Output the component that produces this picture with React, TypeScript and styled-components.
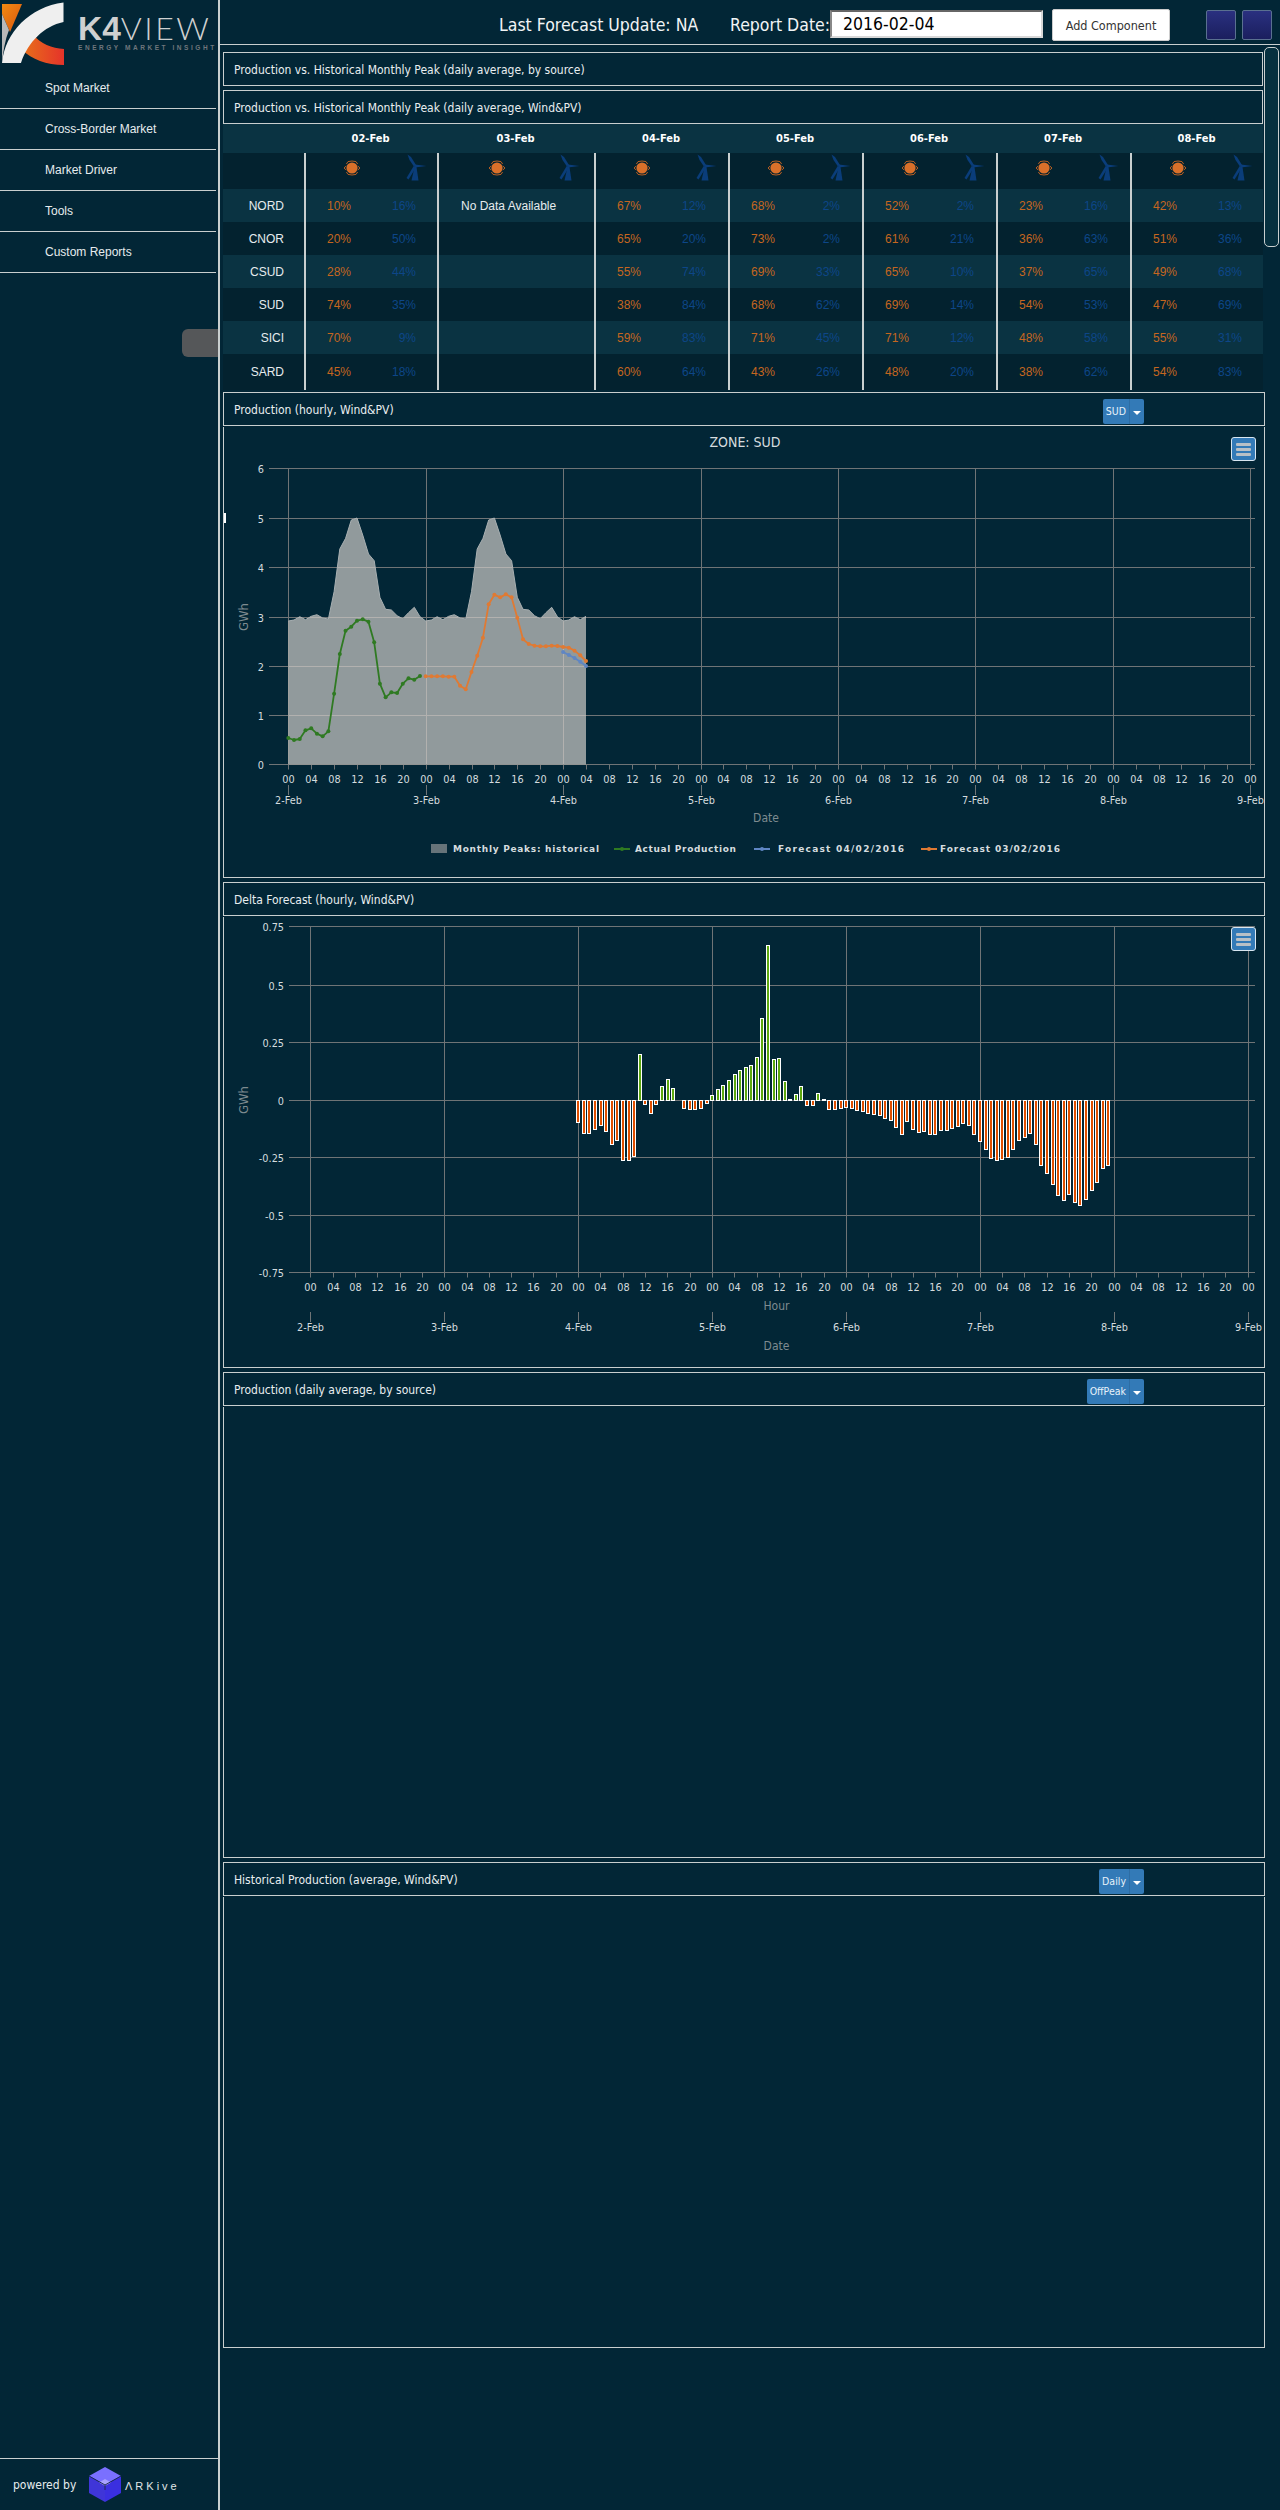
import React from 'react';
import styled, { createGlobalStyle } from 'styled-components';

const BG = '#022636';
const LINE = '#c9cfcf';
const TAHOMA = `"DejaVu Sans", sans-serif`;
const ARIAL = `"Liberation Sans", Arial, sans-serif`;

const Global = createGlobalStyle`
  html, body { margin: 0; padding: 0; background: ${BG}; }
  body { font-family: ${ARIAL}; width: 1280px; height: 2510px; overflow: hidden; }
  * { box-sizing: border-box; }
`;

const Page = styled.div`
  position: relative;
  display: flex;
  width: 1280px;
  height: 2510px;
  background: ${BG};
`;

const Sidebar = styled.aside`
  width: 220px;
  height: 2510px;
  flex: none;
  display: flex;
  flex-direction: column;
  border-right: 2px solid ${LINE};
  position: relative;
`;

const LogoRow = styled.div`
  height: 68px;
  flex: none;
  display: flex;
  padding: 2px 0 0 2px;
`;

const LogoWords = styled.div`
  margin: 10px 0 0 12px;
  color: #cfd0d0;
  display: flex;
  flex-direction: column;
`;

const LogoTitle = styled.div`
  font-family: ${ARIAL};
  font-size: 33.5px;
  line-height: 32px;
  white-space: nowrap;
  b { font-weight: 700; }
  span { font-family: Lato, sans-serif; font-weight: 300; letter-spacing: 2.5px; font-size: 32px; }
`;

const LogoTag = styled.div`
  margin-top: -2px;
  font-size: 6.5px;
  line-height: 9px;
  letter-spacing: 2.55px;
  color: #6f767c;
  white-space: nowrap;
  font-weight: 700;
`;

const Nav = styled.nav`
  display: flex;
  flex-direction: column;
  width: 216px;
`;

const NavItem = styled.div`
  height: 41px;
  padding: 0 0 0 45px;
  display: flex;
  align-items: center;
  font-size: 12px;
  color: #e6ecee;
  border-bottom: 1px solid ${LINE};
`;

const Handle = styled.div`
  position: absolute;
  left: 182px;
  top: 329px;
  width: 36px;
  height: 28px;
  background: #555759;
  border-radius: 6px 0 0 6px;
`;

const Footer = styled.div`
  margin-top: auto;
  height: 52px;
  border-top: 1px solid ${LINE};
  display: flex;
  align-items: center;
  padding: 0 0 0 13px;
  color: #e6ecee;
  font-family: ${TAHOMA};
  font-stretch: condensed;
  font-size: 12px;
`;

const Powered = styled.span`
  width: 75px;
  white-space: nowrap;
`;

const ArkText = styled.span`
  margin: 3px 0 0 3px;
  font-family: ${ARIAL};
  font-size: 11px;
  letter-spacing: 3px;
  color: #e0e6e8;
`;

const Main = styled.main`
  flex: 1;
  display: flex;
  flex-direction: column;
  min-width: 0;
`;

const TopBar = styled.header`
  height: 45px;
  flex: none;
  display: flex;
  align-items: flex-start;
  border-bottom: 1px solid ${LINE};
  color: #f1f4f5;
  font-family: ${TAHOMA};
  font-stretch: condensed;
  font-size: 17.5px;
`;

const TopLabel = styled.span<{ $ml: number; $w: number }>`
  width: ${p => p.$w}px;
  margin: 15px 0 0 ${p => p.$ml}px;
  line-height: 20px;
  white-space: nowrap;
`;

const DateInput = styled.div`
  width: 213px;
  height: 28px;
  margin: 10px 0 0 0;
  background: #fff;
  border: 2px solid #d8d8d8;
  border-top-color: #666;
  border-left-color: #888;
  color: #000;
  padding: 1px 0 0 11px;
  line-height: 22px;
`;

const AddButton = styled.div`
  width: 118px;
  height: 32px;
  margin: 9px 0 0 9px;
  background: #fff;
  border: 1px solid #ccc;
  border-radius: 2px;
  color: #333;
  font-size: 12.5px;
  line-height: 31px;
  text-align: center;
`;

const SquareButton = styled.div<{ $ml: number }>`
  width: 30px;
  height: 30px;
  margin: 10px 0 0 ${p => p.$ml}px;
  background: linear-gradient(#2a3080, #1b1f5e);
  border: 1px solid #5a7090;
  border-radius: 2px;
`;

const Stack = styled.div`
  display: flex;
  flex-direction: column;
  padding: 7px 0 0 3px;
`;

const Panel = styled.section<{ $w?: number; $mb?: number }>`
  width: ${p => p.$w ?? 1042}px;
  margin-bottom: ${p => p.$mb ?? 0}px;
`;

const PanelHeader = styled.div`
  height: 34px;
  border: 1px solid ${LINE};
  padding: 1px 0 0 10px;
  position: relative;
  display: flex;
  align-items: center;
  color: #e9eef0;
  font-family: ${TAHOMA};
  font-stretch: condensed;
  font-size: 12px;
`;

const PanelBody = styled.div<{ $h: number }>`
  position: relative;
  height: ${p => p.$h}px;
  margin-top: 1px;
  border: 1px solid ${LINE};
  border-top: none;
  svg { display: block; }
`;

const Dropdown = styled.div<{ $right: number }>`
  position: absolute;
  right: ${p => p.$right}px;
  top: 6px;
  height: 25px;
  display: flex;
  background: #337ab7;
  border-radius: 2px;
  color: #e8f2fa;
  font-size: 10.5px;
  line-height: 25px;
`;

const DropLabel = styled.span`
  padding: 0 3px;
  border-right: 1px solid #2e6da4;
`;

const Caret = styled.span`
  width: 14px;
  position: relative;
  &::after {
    content: '';
    position: absolute;
    left: 3px;
    top: 12px;
    border-left: 4px solid transparent;
    border-right: 4px solid transparent;
    border-top: 4px solid #fff;
  }
`;

const MenuButton = styled.div`
  position: absolute;
  top: 10px;
  right: 8px;
  width: 25px;
  height: 24px;
  display: flex;
  flex-direction: column;
  justify-content: center;
  gap: 2px;
  padding: 0 4px;
  background: #337ab7;
  border: 1px solid #d8e6f0;
  border-radius: 3px;
  i { display: block; height: 3px; background: #b9c0c6; border-radius: 1px; }
`;

const Table = styled.div`
  width: 1040px;
  height: 266px;
  margin-bottom: 2px;
  color: #e6ecee;
  font-size: 12px;
`;

const Row = styled.div<{ $bg: string; $h: number }>`
  display: grid;
  grid-template-columns: 81px 133px 157px 134px 134px 134px 134px 133px;
  height: ${p => p.$h}px;
  background: ${p => p.$bg};
`;

const HeadCell = styled.div`
  display: flex;
  align-items: center;
  justify-content: center;
  font-family: ${TAHOMA};
  font-stretch: condensed;
  font-weight: 700;
  font-size: 11px;
  color: #fff;
`;

const Zone = styled.div`
  display: flex;
  align-items: center;
  justify-content: flex-end;
  padding-right: 20px;
`;

const DayCell = styled.div`
  border-left: 2px solid ${LINE};
  display: flex;
  align-items: center;
`;

const Pct = styled.span<{ $c: string; $w: number }>`
  width: ${p => p.$w}px;
  text-align: right;
  color: ${p => p.$c};
`;

const NoData = styled.span`
  padding-left: 22px;
  color: #e6ecee;
`;

const IconSlot = styled.div<{ $sun: number; $gap: number }>`
  padding: 0 0 7px ${p => p.$sun}px;
  display: flex;
  align-items: center;
  gap: ${p => p.$gap}px;
`;

const Tick = styled.div`
  position: absolute;
  left: 224px;
  top: 513px;
  width: 2px;
  height: 10px;
  background: #fff;
`;

const Scrollbar = styled.div`
  position: absolute;
  left: 1264px;
  top: 47px;
  width: 15px;
  height: 200px;
  border: 1px solid ${LINE};
  border-radius: 5px;
  background: #06303f;
`;

const Sun = () => (
  <svg width="18" height="18" viewBox="0 0 18 18">
    <circle cx="9" cy="9" r="5.6" fill="#d9702a" />
    <path d="M1 9 L3.2 7 M1 9 L3.2 11 M17 9 L14.8 7 M17 9 L14.8 11 M5 2.6 Q9 1.4 13 2.6 M5 15.4 Q9 16.6 13 15.4 M5 2.6 L3.4 5 M13 2.6 L14.6 5 M5 15.4 L3.4 13 M13 15.4 L14.6 13" stroke="#b85f22" strokeWidth="1" fill="none" />
  </svg>
);

const Turbine = () => (
  <svg width="22" height="28" viewBox="0 0 22 28">
    <path d="M2.5 0.500 L6 3 L11 11 L9 12.500 L4.500 6 Z" fill="#0a3d7a" />
    <path d="M10 10.500 L21.500 12 L10 13.500 Z" fill="#0a3d7a" />
    <path d="M9 11.500 L11 13.500 L3.500 25.500 L1.500 24 Z" fill="#0a3d7a" />
    <path d="M9.500 13 L11.500 13 L13.500 26.500 L6.500 26.500 Z" fill="#0a3d7a" />
  </svg>
);

const Logo = () => (
  <svg width="64" height="64" viewBox="0 0 64 64">
    <defs>
      <linearGradient id="lo1" x1="0" y1="0" x2="1" y2="1">
        <stop offset="0" stopColor="#f08a12" />
        <stop offset="1" stopColor="#d9560f" />
      </linearGradient>
      <linearGradient id="lo2" x1="0" y1="0" x2="1" y2="0">
        <stop offset="0" stopColor="#e8701a" />
        <stop offset="1" stopColor="#e5332a" />
      </linearGradient>
    </defs>
    <path d="M0 2 L20 2 L8 30 L0 12 Z" fill="url(#lo1)" />
    <path d="M32 33 C38 42 50 46 62 47 L62 63 C44 63 30 57 20 48 Z" fill="url(#lo2)" />
    <path d="M61.500 0.500 L61.500 20 C42 24 26 40 19 61 L0 61 C3 30 28 5 61.500 0.500 Z" fill="#efefef" />
    <path d="M0 12 L7 28 C3 38 1 50 0 61 Z" fill="#b9b9b9" />
  </svg>
);

const Cube = () => (
  <svg width="34" height="37" viewBox="0 0 34 37">
    <path d="M17 1 L33 10 L17 19 L1 10 Z" fill="#7a70ff" />
    <path d="M1 10 L17 19 L17 36 L1 27 Z" fill="#3f35d8" />
    <path d="M33 10 L17 19 L17 36 L33 27 Z" fill="#3a2fe0" />
    <path d="M17 13 L23 16.500 L17 20 L11 16.500 Z" fill="#a9a2ff" />
    <path d="M1 10 L17 19 L33 10 M17 19 L17 24" stroke="#1d2a55" strokeWidth="1" fill="none" />
  </svg>
);

const DAYS = ['02-Feb', '03-Feb', '04-Feb', '05-Feb', '06-Feb', '07-Feb', '08-Feb'];
const ZONES = ['NORD', 'CNOR', 'CSUD', 'SUD', 'SICI', 'SARD'];
const SOLAR_C = '#c5661f';
const WIND_C = '#0d4688';
const VALUES: [string, string][][] = [
  [['10', '16'], ['67', '12'], ['68', '2'], ['52', '2'], ['23', '16'], ['42', '13']],
  [['20', '50'], ['65', '20'], ['73', '2'], ['61', '21'], ['36', '63'], ['51', '36']],
  [['28', '44'], ['55', '74'], ['69', '33'], ['65', '10'], ['37', '65'], ['49', '68']],
  [['74', '35'], ['38', '84'], ['68', '62'], ['69', '14'], ['54', '53'], ['47', '69']],
  [['70', '9'], ['59', '83'], ['71', '45'], ['71', '12'], ['48', '58'], ['55', '31']],
  [['45', '18'], ['60', '64'], ['43', '26'], ['48', '20'], ['38', '62'], ['54', '83']],
];
const STRIPE = '#0a3342';
const DARK = '#03222f';

const DataTable = () => (
  <Table>
    <Row $bg={STRIPE} $h={29}>
      <div />
      {DAYS.map(d => <HeadCell key={d}>{d}</HeadCell>)}
    </Row>
    <Row $bg={DARK} $h={36}>
      <div />
      {DAYS.map((d, i) => (
        <DayCell key={d}>
          <IconSlot $sun={i === 1 ? 49 : 37} $gap={i === 1 ? 52 : 44}>
            <Sun />
            <Turbine />
          </IconSlot>
        </DayCell>
      ))}
    </Row>
    {ZONES.map((z, r) => (
      <Row key={z} $bg={r % 2 === 0 ? STRIPE : DARK} $h={r === 5 ? 36 : 33}>
        <Zone>{z}</Zone>
        {VALUES[r].map((v, i) => (
          <React.Fragment key={i}>
            <DayCell>
              <Pct $c={SOLAR_C} $w={45}>{v[0]}%</Pct>
              <Pct $c={WIND_C} $w={65}>{v[1]}%</Pct>
            </DayCell>
            {i === 0 && <DayCell>{r === 0 && <NoData>No Data Available</NoData>}</DayCell>}
          </React.Fragment>
        ))}
      </Row>
    ))}
  </Table>
);

const GRID = '#6f7476';
const LABEL = '#d5dcdf';
const TITLE = '#7e8b90';
const HOURS = ['00', '04', '08', '12', '16', '20'];

const ChartText = styled.text`
  font-family: ${TAHOMA};
  font-stretch: condensed;
  font-size: 10.8px;
  fill: ${LABEL};
`;

const ChartTitle = styled(ChartText)`
  font-size: 14px;
`;

const AxisTitle = styled(ChartText)`
  font-size: 12px;
  fill: ${TITLE};
`;

const YTitle = styled(AxisTitle)`
  font-size: 13px;
`;

const LegendText = styled.text`
  font-family: ${TAHOMA};
  font-size: 9px;
  font-weight: 700;
  fill: #d5dcdf;
`;

interface AxisProps {
  x0: number; dx: number; left: number; right: number;
  yTop: number; yBot: number; ys: number[]; yLabels: string[]; labelX: number;
  hourY: number; dayY: number; dayTick0: number; dayTick1: number;
  dayLabels: string[];
}

const Axes = ({ x0, dx, left, right, yTop, yBot, ys, yLabels, labelX, hourY, dayY, dayTick0, dayTick1, dayLabels }: AxisProps) => {
  const hourTicks: React.ReactNode[] = [];
  for (let d = 0; d <= 7; d++) {
    for (let k = 0; k < (d === 7 ? 1 : 6); k++) {
      const x = Math.round(x0 + d * dx + (k * dx) / 6) + 0.5;
      hourTicks.push(
        <g key={`${d}-${k}`}>
          <line x1={x} x2={x} y1={yBot} y2={yBot + 5} stroke={GRID} />
          <ChartText x={x} y={hourY} textAnchor="middle">{HOURS[k]}</ChartText>
        </g>
      );
    }
  }
  return (
    <g>
      {ys.map((y, i) => (
        <g key={i}>
          <line x1={left} x2={right} y1={y} y2={y} stroke={GRID} />
          <ChartText x={labelX} y={y + 4} textAnchor="end">{yLabels[i]}</ChartText>
        </g>
      ))}
      {dayLabels.map((l, d) => {
        const x = Math.round(x0 + d * dx) + 0.5;
        return (
          <g key={l}>
            <line x1={x} x2={x} y1={yTop} y2={yBot} stroke={GRID} />
            <line x1={x} x2={x} y1={dayTick0} y2={dayTick1} stroke={GRID} />
            <ChartText x={x} y={dayY} textAnchor="middle">{l}</ChartText>
          </g>
        );
      })}
      {hourTicks}
    </g>
  );
};

const DAY_LABELS = ['2-Feb', '3-Feb', '4-Feb', '5-Feb', '6-Feb', '7-Feb', '8-Feb', '9-Feb'];

const py = (y3: number) => 390 + y3 / 3;

const AREA_DAY = [693, 690, 680, 689, 679, 674, 684, 687, 605, 477, 445, 390, 384, 435, 492, 512, 622, 658, 660, 677, 686, 668, 652, 680];
const GREEN = [1044, 1050, 1047, 1021, 1015, 1031, 1039, 1024, 911, 792, 722, 710, 692, 688, 695, 757, 881, 922, 907, 909, 881, 865, 869, 858];
const ORANGE = [859, 859, 859, 859, 860, 860, 887, 898, 846, 797, 743, 643, 614, 622, 613, 622, 683, 748, 762, 767, 769, 769, 767, 768, 771, 773, 782, 796, 813];
const BLUE = [786, 795, 804, 815, 828];

const hx = (h: number) => 288.3 + (h * 137.4) / 24;

const Series = ({ pts, color, r, w }: { pts: number[][]; color: string; r: number; w: number }) => (
  <g>
    <polyline points={pts.map(p => p.join(',')).join(' ')} fill="none" stroke={color} strokeWidth={w} strokeLinejoin="round" />
    {pts.map((p, i) => <circle key={i} cx={p[0]} cy={p[1]} r={r} fill={color} />)}
  </g>
);

const LegendLine = ({ x, color }: { x: number; color: string }) => (
  <g>
    <line x1={x} x2={x + 16} y1="849" y2="849" stroke={color} strokeWidth="2" />
    <circle cx={x + 8} cy="849" r="2" fill={color} />
  </g>
);

const ProductionChart = () => {
  const areaVals = [...AREA_DAY, ...AREA_DAY, ...AREA_DAY.slice(0, 5)];
  const areaPts = areaVals.map((v, i) => `${hx(i).toFixed(1)},${py(v).toFixed(1)}`);
  const area = `${hx(0)},764.5 ${areaPts.join(' ')} ${hx(52)},764.5`;
  const legendY = 852;
  return (
    <svg width="1040" height="450" viewBox="224 427 1040 450">
      <ChartTitle x="745" y="447" textAnchor="middle">ZONE: SUD</ChartTitle>
      <Axes x0={288.3} dx={137.4} left={269} right={1255} yTop={468} yBot={764.5}
        ys={[468.5, 518.5, 567.5, 617.5, 666.5, 715.5, 764.5]} yLabels={['6', '5', '4', '3', '2', '1', '0']} labelX={264}
        hourY={783} dayY={804} dayTick0={785} dayTick1={795} dayLabels={DAY_LABELS} />
      <polygon points={area} fill="#ceccc8" fillOpacity="0.7" />
      <polyline points={areaPts.join(' ')} fill="none" stroke="#a9b0b2" strokeWidth="1" />
      <Series pts={GREEN.map((y, i) => [hx(i), py(y)])} color="#2f7a22" r={2} w={1.8} />
      <Series pts={BLUE.map((y, i) => [hx(i + 48), py(y)])} color="#5f86c4" r={2} w={1.8} />
      <Series pts={ORANGE.map((y, i) => [hx(i + 24), py(y)])} color="#e07a33" r={2} w={1.8} />
      <YTitle x="0" y="0" textAnchor="middle" transform="translate(248 617) rotate(-90)">GWh</YTitle>
      <AxisTitle x="766" y="822" textAnchor="middle">Date</AxisTitle>
      <rect x="431" y="844" width="16" height="9" fill="#67747a" />
      <LegendText x="453" y={legendY} textLength={146}>Monthly Peaks: historical</LegendText>
      <LegendLine x={614} color="#2f7a22" />
      <LegendText x="635" y={legendY} textLength={101}>Actual Production</LegendText>
      <LegendLine x={754} color="#5f86c4" />
      <LegendText x="778" y={legendY} textLength={126}>Forecast 04/02/2016</LegendText>
      <LegendLine x={921} color="#e07a33" />
      <LegendText x="940" y={legendY} textLength={120}>Forecast 03/02/2016</LegendText>
    </svg>
  );
};

const BARS: (number | null)[] = [
  607, 640, 640, 628, 616, 634, 673, 661, 721, 721, 710, 403, 553, 580, 553, 499, 478, 505, null,
  565, 568, 568, 565, 551, 526, 508, 496, 481, 463, 451, 442, 436, 412, 295, 76, 418, 415, 484, 538, 523, 499,
  556, 556, 520, 538, 568, 568, 565, 562, 565, 571, 574, 580, 583, 586, 595, 601, 622, 643, 604, 628, 637, 634, 643, 643,
  631, 631, 625, 619, 610, 616, 643, 664, 688, 715, 721, 718, 712, 688, 661, 652, 640, 673, 736, 760, 793, 826, 841,
  823, 847, 856, 838, 811, 787, 745, 736,
];

const DeltaChart = () => {
  const zero = 1100.5;
  return (
    <svg width="1040" height="450" viewBox="224 917 1040 450">
      <Axes x0={310.3} dx={133.9} left={289} right={1255} yTop={926.5} yBot={1272.5}
        ys={[926.5, 985.5, 1042.5, 1100.5, 1157.5, 1215.5, 1272.5]}
        yLabels={['0.75', '0.5', '0.25', '0', '-0.25', '-0.5', '-0.75']} labelX={284}
        hourY={1291} dayY={1331} dayTick0={1312} dayTick1={1322} dayLabels={DAY_LABELS} />
      {BARS.map((b, i) => {
        if (b === null) return null;
        const h = Math.max(1, Math.round(Math.abs(b - 541) / 3));
        const up = b < 541;
        const x = Math.round(578.3 + (i * 133.9) / 24);
        return (
          <rect key={i} x={x - 1.5} y={up ? zero - h : zero} width={3} height={h}
            fill={up ? '#5da80e' : '#e04e00'} stroke="#fff" strokeWidth="1" />
        );
      })}
      <YTitle x="0" y="0" textAnchor="middle" transform="translate(248 1100) rotate(-90)">GWh</YTitle>
      <AxisTitle x="776.5" y="1310" textAnchor="middle">Hour</AxisTitle>
      <AxisTitle x="776.5" y="1350" textAnchor="middle">Date</AxisTitle>
    </svg>
  );
};

export default function App() {
  return (
    <Page>
      <Global />
      <Sidebar>
        <LogoRow>
          <Logo />
          <LogoWords>
            <LogoTitle><b>K4</b><span>VIEW</span></LogoTitle>
            <LogoTag>ENERGY MARKET INSIGHT</LogoTag>
          </LogoWords>
        </LogoRow>
        <Nav>
          {['Spot Market', 'Cross-Border Market', 'Market Driver', 'Tools', 'Custom Reports'].map(n => (
            <NavItem key={n}>{n}</NavItem>
          ))}
        </Nav>
        <Handle />
        <Footer>
          <Powered>powered by</Powered>
          <Cube />
          <ArkText>ΛRKive</ArkText>
        </Footer>
      </Sidebar>
      <Main>
        <TopBar>
          <TopLabel $ml={279} $w={201}>Last Forecast Update: NA</TopLabel>
          <TopLabel $ml={30} $w={100}>Report Date:</TopLabel>
          <DateInput>2016-02-04</DateInput>
          <AddButton>Add Component</AddButton>
          <SquareButton $ml={36} />
          <SquareButton $ml={6} />
        </TopBar>
        <Stack>
          <Panel $w={1040} $mb={4}>
            <PanelHeader>Production vs. Historical Monthly Peak (daily average, by source)</PanelHeader>
          </Panel>
          <Panel $w={1040}>
            <PanelHeader>Production vs. Historical Monthly Peak (daily average, Wind&amp;PV)</PanelHeader>
            <DataTable />
          </Panel>
          <Panel $mb={4}>
            <PanelHeader>
              Production (hourly, Wind&amp;PV)
              <Dropdown $right={120}><DropLabel>SUD</DropLabel><Caret /></Dropdown>
            </PanelHeader>
            <PanelBody $h={451}>
              <ProductionChart />
              <MenuButton><i /><i /><i /></MenuButton>
            </PanelBody>
          </Panel>
          <Panel $mb={4}>
            <PanelHeader>Delta Forecast (hourly, Wind&amp;PV)</PanelHeader>
            <PanelBody $h={451}>
              <DeltaChart />
              <MenuButton><i /><i /><i /></MenuButton>
            </PanelBody>
          </Panel>
          <Panel $mb={4}>
            <PanelHeader>
              Production (daily average, by source)
              <Dropdown $right={120}><DropLabel>OffPeak</DropLabel><Caret /></Dropdown>
            </PanelHeader>
            <PanelBody $h={451} />
          </Panel>
          <Panel>
            <PanelHeader>
              Historical Production (average, Wind&amp;PV)
              <Dropdown $right={120}><DropLabel>Daily</DropLabel><Caret /></Dropdown>
            </PanelHeader>
            <PanelBody $h={451} />
          </Panel>
        </Stack>
      </Main>
      <Scrollbar />
      <Tick />
    </Page>
  );
}
